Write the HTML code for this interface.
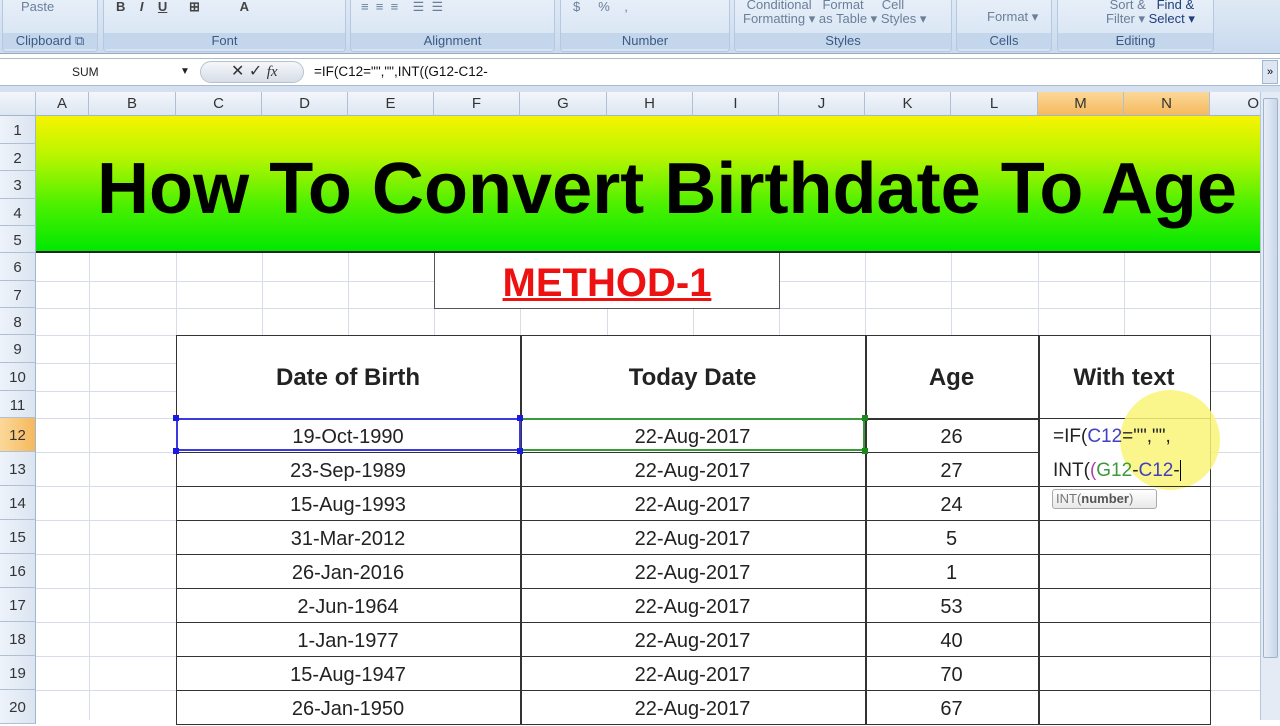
<!DOCTYPE html>
<html><head><meta charset="utf-8"><style>
*{margin:0;padding:0;box-sizing:border-box}
body{width:1280px;height:720px;overflow:hidden;background:#fff;font-family:"Liberation Sans",sans-serif;position:relative}
.a{position:absolute}
.rib{left:0;top:0;width:1280px;height:54px;background:linear-gradient(#dfe9f5,#c9daee);border-bottom:1px solid #9ab}
.grp{top:0;height:52px;border:1px solid #b5c8e0;border-top:none;border-radius:0 0 4px 4px;background:linear-gradient(#e6eef8,#d5e3f3)}
.gl{bottom:2px;height:16px;left:0;right:0;text-align:center;font-size:13px;color:#3b5a82;background:#c3d6ec}
.rt{font-size:13px;color:#6a7f99;line-height:14px}
.fb{left:0;top:58px;width:1280px;height:28px;background:#fff;border-top:1px solid #aabbd0;border-bottom:1px solid #aabbd0}
.hd{top:92px;height:24px;background:linear-gradient(#f3f6fb,#dde6f2);border-right:1px solid #b0bfd4;border-bottom:1px solid #9eb6ce;text-align:center;font-size:15px;color:#333;line-height:24px}
.rh{left:0;width:36px;background:linear-gradient(90deg,#eef3fa,#dbe4f1);border-bottom:1px solid #b0bfd4;border-right:1px solid #9eb6ce;text-align:center;font-size:15px;color:#333}
.vl{top:116px;width:1px;height:604px;background:#d6dde8}
.hl{left:36px;width:1224px;height:1px;background:#d6dde8}
.c{text-align:center;font-family:"Liberation Sans","DejaVu Sans",sans-serif;color:#222}
</style></head><body>
<div class="a rib"></div>
<div class="a grp" style="left:2px;width:96px"><div class="a rt" style="left:18px;top:0">Paste</div><div class="a gl">Clipboard ⧉</div></div>
<div class="a grp" style="left:103px;width:243px"><div class="a rt" style="left:12px;top:0;color:#444;font-weight:bold">B&nbsp;&nbsp;&nbsp;&nbsp;<i>I</i>&nbsp;&nbsp;&nbsp;&nbsp;<u>U</u>&nbsp;&nbsp;&nbsp;&nbsp;&nbsp;&nbsp;⊞&nbsp;&nbsp;&nbsp;&nbsp;&nbsp;&nbsp;&nbsp;&nbsp;&nbsp;&nbsp;&nbsp;A</div><div class="a gl">Font</div></div>
<div class="a grp" style="left:350px;width:205px"><div class="a rt" style="left:10px;top:0">≡&nbsp;&nbsp;≡&nbsp;&nbsp;≡&nbsp;&nbsp;&nbsp;&nbsp;☰&nbsp;&nbsp;☰</div><div class="a gl">Alignment</div></div>
<div class="a grp" style="left:560px;width:170px"><div class="a rt" style="left:12px;top:0">$&nbsp;&nbsp;&nbsp;&nbsp;&nbsp;%&nbsp;&nbsp;&nbsp;&nbsp;,</div><div class="a gl">Number</div></div>
<div class="a grp" style="left:734px;width:218px"><div class="a rt" style="left:8px;top:-2px">&nbsp;Conditional&nbsp;&nbsp;&nbsp;Format&nbsp;&nbsp;&nbsp;&nbsp;&nbsp;Cell<br>Formatting ▾ as Table ▾ Styles ▾</div><div class="a gl">Styles</div></div>
<div class="a grp" style="left:956px;width:96px"><div class="a rt" style="left:30px;top:10px">Format ▾</div><div class="a gl">Cells</div></div>
<div class="a grp" style="left:1057px;width:157px"><div class="a rt" style="left:48px;top:-2px">&nbsp;Sort &amp;&nbsp;&nbsp;&nbsp;<span style="color:#1f3f7a">Find &amp;</span><br>Filter ▾ <span style="color:#1f3f7a">Select ▾</span></div><div class="a gl">Editing</div></div>
<div class="a fb"></div>
<div class="a" style="left:0;top:60px;width:196px;height:24px;font-size:12px;line-height:24px;padding-left:72px;color:#222">SUM<span style="position:absolute;left:180px;font-size:10px">▼</span></div>
<div class="a" style="left:200px;top:61px;width:104px;height:22px;border-radius:11px;background:linear-gradient(#f5f7fa,#d7dee8);border:1px solid #b7c2d0;font-size:16px;line-height:20px;color:#333;padding-left:30px">✕ ✓ <i style="font-family:'Liberation Serif';font-size:15px">fx</i></div>
<div class="a" style="left:314px;top:60px;font-size:13.5px;line-height:24px;color:#111">=IF(C12="","",INT((G12-C12-</div>
<div class="a" style="left:1262px;top:60px;width:16px;height:24px;background:#dde6f2;border:1px solid #9eb6ce;font-size:11px;text-align:center;line-height:22px">»</div>
<div class="a" style="left:0;top:86px;width:1280px;height:6px;background:#d5e1f0"></div>
<div class="a hd" style="left:0;width:36px"></div>
<div class="a hd" style="left:36px;width:53px">A</div>
<div class="a hd" style="left:89px;width:87px">B</div>
<div class="a hd" style="left:176px;width:86px">C</div>
<div class="a hd" style="left:262px;width:86px">D</div>
<div class="a hd" style="left:348px;width:86px">E</div>
<div class="a hd" style="left:434px;width:86px">F</div>
<div class="a hd" style="left:520px;width:87px">G</div>
<div class="a hd" style="left:607px;width:86px">H</div>
<div class="a hd" style="left:693px;width:86px">I</div>
<div class="a hd" style="left:779px;width:86px">J</div>
<div class="a hd" style="left:865px;width:86px">K</div>
<div class="a hd" style="left:951px;width:87px">L</div>
<div class="a hd" style="left:1038px;width:86px;background:linear-gradient(#fbd89a,#f5b95c)">M</div>
<div class="a hd" style="left:1124px;width:86px;background:linear-gradient(#fbd89a,#f5b95c)">N</div>
<div class="a hd" style="left:1210px;width:52px;text-align:right;padding-right:2px">O</div>
<div class="a" style="left:1260px;top:92px;width:20px;height:628px;background:#e4ebf5;border-left:1px solid #b7c6da"></div>
<div class="a" style="left:1263px;top:98px;width:15px;height:560px;background:linear-gradient(90deg,#e8eef7,#c7d6ea);border:1px solid #9fb3cd;border-radius:2px"></div>

<div class="a vl" style="left:89px"></div><div class="a vl" style="left:176px"></div><div class="a vl" style="left:262px"></div><div class="a vl" style="left:348px"></div><div class="a vl" style="left:434px"></div><div class="a vl" style="left:520px"></div><div class="a vl" style="left:607px"></div><div class="a vl" style="left:693px"></div><div class="a vl" style="left:779px"></div><div class="a vl" style="left:865px"></div><div class="a vl" style="left:951px"></div><div class="a vl" style="left:1038px"></div><div class="a vl" style="left:1124px"></div><div class="a vl" style="left:1210px"></div>
<div class="a hl" style="top:281px"></div><div class="a hl" style="top:308px"></div><div class="a hl" style="top:335px"></div><div class="a hl" style="top:363px"></div><div class="a hl" style="top:391px"></div><div class="a hl" style="top:418px"></div><div class="a hl" style="top:452px"></div><div class="a hl" style="top:486px"></div><div class="a hl" style="top:520px"></div><div class="a hl" style="top:554px"></div><div class="a hl" style="top:588px"></div><div class="a hl" style="top:622px"></div><div class="a hl" style="top:656px"></div><div class="a hl" style="top:690px"></div>

<div class="a rh" style="top:116px;height:28px;line-height:30px">1</div>
<div class="a rh" style="top:144px;height:27px;line-height:29px">2</div>
<div class="a rh" style="top:171px;height:28px;line-height:30px">3</div>
<div class="a rh" style="top:199px;height:27px;line-height:29px">4</div>
<div class="a rh" style="top:226px;height:27px;line-height:29px">5</div>
<div class="a rh" style="top:253px;height:28px;line-height:30px">6</div>
<div class="a rh" style="top:281px;height:27px;line-height:29px">7</div>
<div class="a rh" style="top:308px;height:27px;line-height:29px">8</div>
<div class="a rh" style="top:335px;height:28px;line-height:30px">9</div>
<div class="a rh" style="top:363px;height:28px;line-height:30px">10</div>
<div class="a rh" style="top:391px;height:27px;line-height:29px">11</div>
<div class="a rh" style="top:418px;height:34px;line-height:36px;background:linear-gradient(90deg,#fbd89a,#f5b95c)">12</div>
<div class="a rh" style="top:452px;height:34px;line-height:36px">13</div>
<div class="a rh" style="top:486px;height:34px;line-height:36px">14</div>
<div class="a rh" style="top:520px;height:34px;line-height:36px">15</div>
<div class="a rh" style="top:554px;height:34px;line-height:36px">16</div>
<div class="a rh" style="top:588px;height:34px;line-height:36px">17</div>
<div class="a rh" style="top:622px;height:34px;line-height:36px">18</div>
<div class="a rh" style="top:656px;height:34px;line-height:36px">19</div>
<div class="a rh" style="top:690px;height:34px;line-height:36px">20</div>

<div class="a" style="left:36px;top:116px;width:1224px;height:137px;background:linear-gradient(#f7f400,#b8f500 30%,#4ef000 65%,#00e800);border-bottom:2px solid #222"></div>
<svg class="a" style="left:0;top:116px" width="1280" height="137"><text x="97" y="97" textLength="1140" lengthAdjust="spacingAndGlyphs" font-family="Liberation Sans, sans-serif" font-weight="bold" font-size="72" fill="#000">How To Convert Birthdate To Age</text></svg>

<div class="a" style="left:434px;top:253px;width:346px;height:56px;background:#fff;border:1px solid #555;border-top:none"></div>
<div class="a" style="left:434px;top:261px;width:346px;text-align:center;font-size:40px;font-weight:bold;color:#ee1111;text-decoration:underline;text-decoration-thickness:3px;font-family:'Liberation Sans',sans-serif">METHOD-1</div>

<div class="a" style="left:176px;top:335px;width:1035px;height:390px;background:#fff;border:1.5px solid #333"></div>
<div class="a" style="left:520px;top:335px;width:1.5px;height:390px;background:#333"></div>
<div class="a" style="left:865px;top:335px;width:1.5px;height:390px;background:#333"></div>
<div class="a" style="left:1038px;top:335px;width:1.5px;height:390px;background:#333"></div>
<div class="a" style="left:176px;top:418px;width:1035px;height:1.5px;background:#333"></div>
<div class="a c" style="left:176px;top:364px;width:344px;font-size:24px;font-weight:bold">Date of Birth</div>
<div class="a c" style="left:520px;top:364px;width:345px;font-size:24px;font-weight:bold">Today Date</div>
<div class="a c" style="left:865px;top:364px;width:173px;font-size:24px;font-weight:bold">Age</div>
<div class="a c" style="left:1038px;top:364px;width:172px;font-size:24px;font-weight:bold">With text</div>

<div class="a" style="left:176px;top:452px;width:862px;height:1px;background:#333"></div>
<div class="a" style="left:176px;top:486px;width:862px;height:1px;background:#333"></div>
<div class="a" style="left:176px;top:520px;width:1035px;height:1px;background:#333"></div>
<div class="a" style="left:176px;top:554px;width:1035px;height:1px;background:#333"></div>
<div class="a" style="left:176px;top:588px;width:1035px;height:1px;background:#333"></div>
<div class="a" style="left:176px;top:622px;width:1035px;height:1px;background:#333"></div>
<div class="a" style="left:176px;top:656px;width:1035px;height:1px;background:#333"></div>
<div class="a" style="left:176px;top:690px;width:1035px;height:1px;background:#333"></div>

<div class="a c" style="left:176px;top:425px;width:344px;font-size:20px;line-height:24px">19-Oct-1990</div>
<div class="a c" style="left:176px;top:454px;width:344px;font-size:20px;line-height:34px">23-Sep-1989<br>15-Aug-1993<br>31-Mar-2012<br>26-Jan-2016<br>2-Jun-1964<br>1-Jan-1977<br>15-Aug-1947<br>26-Jan-1950</div>
<div class="a c" style="left:520px;top:425px;width:345px;font-size:20px;line-height:24px">22-Aug-2017</div>
<div class="a c" style="left:520px;top:454px;width:345px;font-size:20px;line-height:34px">22-Aug-2017<br>22-Aug-2017<br>22-Aug-2017<br>22-Aug-2017<br>22-Aug-2017<br>22-Aug-2017<br>22-Aug-2017<br>22-Aug-2017</div>
<div class="a c" style="left:865px;top:425px;width:173px;font-size:20px;line-height:24px">26</div>
<div class="a c" style="left:865px;top:454px;width:173px;font-size:20px;line-height:34px">27<br>24<br>5<br>1<br>53<br>40<br>70<br>67</div>

<div class="a" style="left:176px;top:418px;width:345px;height:33px;border:2px solid #3a3ae0"></div>
<div class="a" style="left:521px;top:418px;width:344px;height:33px;border:2px solid #3a9a3a;border-left:none"></div>
<div class="a" style="left:173px;top:415px;width:6px;height:6px;background:#1a1ae0"></div>
<div class="a" style="left:517px;top:415px;width:6px;height:6px;background:#1a1ae0"></div>
<div class="a" style="left:173px;top:448px;width:6px;height:6px;background:#1a1ae0"></div>
<div class="a" style="left:517px;top:448px;width:6px;height:6px;background:#1a1ae0"></div>
<div class="a" style="left:862px;top:415px;width:6px;height:6px;background:#1a8a1a"></div>
<div class="a" style="left:862px;top:448px;width:6px;height:6px;background:#1a8a1a"></div>

<div class="a" style="left:1039px;top:419px;width:171px;height:67px;background:#fff"></div>
<div class="a" style="left:1120px;top:390px;width:100px;height:100px;border-radius:50%;background:rgba(250,245,120,0.85)"></div>
<div class="a" style="left:1039px;top:419px;width:171px;height:68px;border-left:1px solid #333;border-bottom:1.5px solid #333"></div>
<div class="a" style="left:1053px;top:420px;font-size:19px;line-height:34px;color:#222;white-space:nowrap">=IF(<span style="color:#4040c0">C12</span>="","",<br>INT(<span style="color:#b040b0">(</span><span style="color:#3a9a3a">G12</span>-<span style="color:#4040c0">C12</span>-<span style="border-right:1.5px solid #000"></span></div>
<div class="a" style="left:1052px;top:489px;width:105px;height:20px;border:1px solid #aaa;border-radius:3px;background:linear-gradient(#fff,#e8e8e8);font-size:13px;line-height:18px;color:#777;padding-left:3px">INT(<b style="color:#555">number</b>)</div>
</body></html>
